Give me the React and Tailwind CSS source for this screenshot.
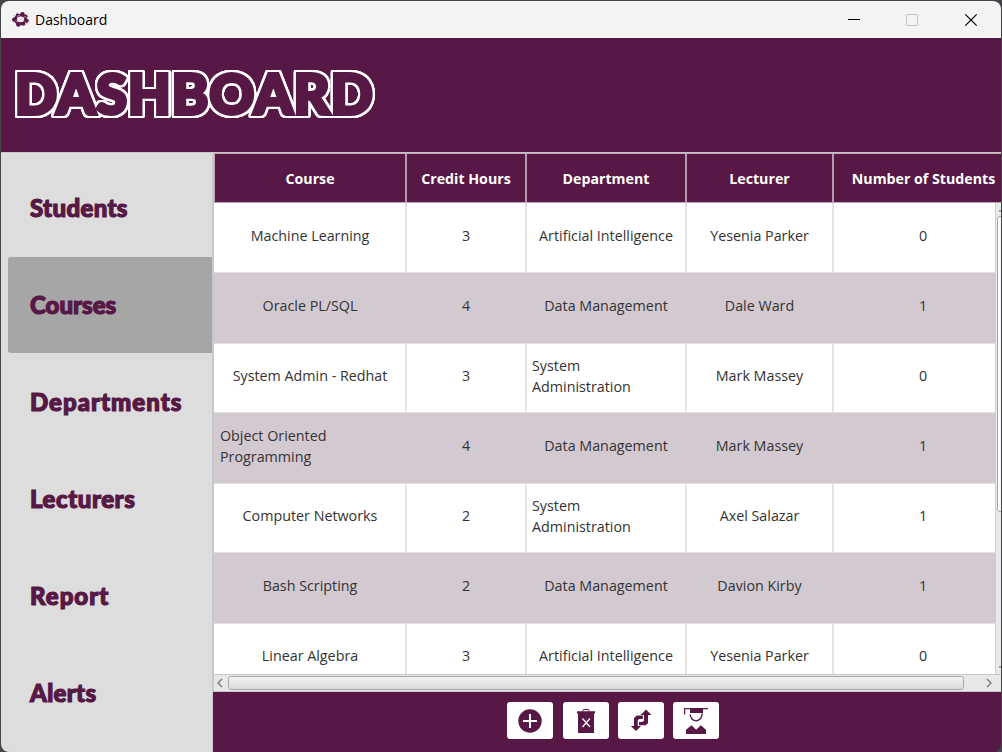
const navItems = [
  { label: "Students", tracking: "tracking-[0.35px]" },
  { label: "Courses", tracking: "tracking-[0px]", active: true },
  { label: "Departments", tracking: "tracking-[1px]" },
  { label: "Lecturers", tracking: "tracking-[0.55px]" },
  { label: "Report", tracking: "tracking-[1px]" },
  { label: "Alerts", tracking: "tracking-[0.3px]" },
];

const columns = ["Course", "Credit Hours", "Department", "Lecturer", "Number of Students"];

const rows = [
  ["Machine Learning", "3", "Artificial Intelligence", "Yesenia Parker", "0"],
  ["Oracle PL/SQL", "4", "Data Management", "Dale Ward", "1"],
  ["System Admin - Redhat", "3", "System Administration", "Mark Massey", "0"],
  ["Object Oriented Programming", "4", "Data Management", "Mark Massey", "1"],
  ["Computer Networks", "2", "System Administration", "Axel Salazar", "1"],
  ["Bash Scripting", "2", "Data Management", "Davion Kirby", "1"],
  ["Linear Algebra", "3", "Artificial Intelligence", "Yesenia Parker", "0"],
];

const wraps = ["System Administration", "Object Oriented Programming"];

function AppLogo() {
  return (
    <svg width="17" height="15" viewBox="0 0 17 15">
      <ellipse cx="8.5" cy="7.5" rx="5" ry="4.3" fill="none" stroke="#571845" strokeWidth="3" />
      <g fill="#571845">
        <circle cx="10.5" cy="2.2" r="2.2" />
        <circle cx="5.6" cy="3" r="1.8" />
        <circle cx="2.2" cy="7.6" r="2.2" />
        <circle cx="6.3" cy="12.6" r="2.2" />
        <circle cx="11.4" cy="11.8" r="1.9" />
        <circle cx="14.7" cy="8.8" r="2.1" />
        <circle cx="13.8" cy="4.2" r="1.8" />
      </g>
      <ellipse cx="8.600" cy="7.300" rx="3.600" ry="2.700" fill="#eee6ec" />
      <path d="M5 4.500 8 2.800M11.500 5.200l2.800-.5M13 9.500l.8 1.800M3.400 8.700 5.500 10" stroke="#c9b4c3" strokeWidth=".8" />
      <path d="M1.500 4.200 3 2.800M13.200 13.200l2-1.500" stroke="#d8cfc0" strokeWidth="1.500" />
    </svg>
  );
}

function TitleBar() {
  return (
    <div className="flex h-[37px] shrink-0 items-center bg-[#f3f3f3] pl-[11px]">
      <AppLogo />
      <span className="ml-[6px] flex-1 font-['Open_Sans',sans-serif] text-[14px] text-black">Dashboard</span>
      <svg width="140" height="18" viewBox="0 0 140 18" fill="none" className="mr-[17px]">
        <path d="M4 8.5h12" stroke="#000" />
        <rect x="62.5" y="3.5" width="11" height="11" rx="1" stroke="#c3c3c3" />
        <path d="m121.300 3.300 11.400 11.400m0-11.400-11.400 11.400" stroke="#000" strokeWidth="1.200" />
      </svg>
    </div>
  );
}

function Sidebar() {
  return (
    <nav className="flex w-[212px] shrink-0 flex-col gap-px border-r border-[#c8c8c8] bg-[#dddddd] pt-[7px] pl-[7px]">
      {navItems.map((item) => (
        <button
          key={item.label}
          className={
            "flex h-24 shrink-0 items-center rounded-l-[3px] pl-[22px] font-['Lato',sans-serif] text-[24px] font-black text-[#571845] [-webkit-text-stroke:1.2px_#571845] " +
            item.tracking +
            (item.active ? " bg-[#a6a6a6]" : "")
          }
        >
          {item.label}
        </button>
      ))}
    </nav>
  );
}

function Chevron({ d, className }) {
  return (
    <svg width="6" height="10" viewBox="0 0 6 10" fill="none" className={className}>
      <path d={d} stroke="#777" strokeWidth="1.300" />
    </svg>
  );
}

function Table() {
  return (
    <div className="flex min-h-0 flex-1 flex-col overflow-hidden bg-[#c8c8c8] pl-px">
      <div className="grid h-[50px] w-[798px] shrink-0 grid-cols-[192px_120px_160px_147px_179px] border-y border-l border-[#bda5b6] bg-[#571845]">
        {columns.map((name) => (
          <div
            key={name}
            className="flex items-center justify-center border-r-2 border-[#b39bab] pt-px font-['Open_Sans',sans-serif] text-[14.200px] font-bold whitespace-nowrap text-white last:border-r-0"
          >
            {name}
          </div>
        ))}
      </div>
      <div className="flex min-h-0 flex-1">
        <div className="w-[782px] overflow-hidden">
          {rows.map((row, i) => (
            <div
              key={i}
              className={
                "grid grid-cols-[193px_120px_160px_147px_178px] border-b border-[#e2e2e2] " +
                (i % 2 ? "h-[71px] bg-[#d3c9d0]" : i === 0 ? "h-[70px] bg-white" : "h-[69px] bg-white")
              }
            >
              {row.map((cell, j) => (
                <div
                  key={j}
                  className={
                    "flex items-center border-r-2 pr-[5px] font-['Open_Sans',sans-serif] text-[14.300px] leading-[21px] text-[#333] last:border-r-0 " +
                    (i % 2 ? "border-[#cfcbd0] " : "border-[#e4e4e4] ") +
                    (j === 0 ? "pl-[6px] " : "pl-[5px] ") +
                    (wraps.includes(cell) ? "justify-start pb-[4px]" : "justify-center pb-[5px] whitespace-nowrap")
                  }
                >
                  <span className={wraps.includes(cell) ? "w-[115px]" : ""}>{cell}</span>
                </div>
              ))}
            </div>
          ))}
        </div>
        <div className="flex w-[6px] flex-col overflow-hidden border-l border-[#d0d0d0] bg-[#e8e8e8]">
          <div className="mt-[7px] ml-[3px] h-[2px] w-[2px] bg-[#999]" />
          <div className="mt-[4px] ml-px h-[296px] w-[13px] shrink-0 rounded-[3px] border border-[#a8a8a8] bg-linear-to-r from-white to-[#d9d9d9]" />
          <div className="mt-auto mb-[6px] ml-[3px] h-[2px] w-[2px] shrink-0 bg-[#999]" />
        </div>
      </div>
      <div className="flex h-[18px] shrink-0 items-center border-y border-[#c8c8c8] bg-[#e8e8e8] pl-[3px]">
        <Chevron d="M5 1 1 5l4 4" />
        <div className="ml-[5px] h-[14px] w-[736px] rounded-[3px] border border-[#a8a8a8] bg-linear-to-b from-[#f3f3f3] to-[#d9d9d9]" />
        <Chevron d="m1 1 4 4-4 4" className="ml-[22px]" />
      </div>
    </div>
  );
}

function AddIcon() {
  return (
    <svg width="24" height="24" viewBox="0 0 24 24">
      <circle cx="12" cy="12" r="11.700" fill="#571845" />
      <path d="M12 5v14M5 12h14" stroke="#fff" strokeWidth="2" />
    </svg>
  );
}

function TrashIcon() {
  return (
    <svg width="24" height="24" viewBox="0 0 24 24" fill="none">
      <path d="M9 2.500V1.200Q9 .5 9.700.5h4.600q.7 0 .7.700v1.300" stroke="#571845" />
      <path d="M3 2.300h18v2.200h-1V24H4V4.500H3z" fill="#571845" />
      <path d="m8.500 9.500 7.500 8.500m0-8.500-7.500 8.500" stroke="#fff" strokeWidth="1.300" />
    </svg>
  );
}

function SwapIcon() {
  return (
    <svg width="24" height="24" viewBox="0 0 24 24" className="mb-[2px]">
      <g fill="#571845">
        <path d="M17 1.500 22.500 7H19v8.300l-2.500 2H10v-3.500h3.500l1.500-1V7h-3.300z" />
        <path d="M7 23 1.800 18H5V10l2.800-2.500H14V11h-4l-1.200 1.200V18H12z" />
      </g>
      <path d="M9.400 16v-2.700h3.200l1.700-1.300V8.700" fill="none" stroke="#fff" strokeWidth="1" />
    </svg>
  );
}

function GraduateIcon() {
  return (
    <svg width="26" height="28" viewBox="0 0 26 28">
      <g fill="#571845">
        <path d="M1 1h24v1.300H20V6H7V2.300H2.200V7.500H1z" />
        <path d="M3 27v-4.300l5.500-4.500 4.700 4.500 4.600-4.500 5.200 4.500V27z" />
      </g>
      <path d="M7.200 7.500q.6 6 6 6.200 5.400-.2 6-7.200" fill="none" stroke="#571845" strokeWidth="1.400" />
    </svg>
  );
}

const actions = [
  { name: "add", Icon: AddIcon, cls: "" },
  { name: "delete", Icon: TrashIcon, cls: "ml-[10px]" },
  { name: "update", Icon: SwapIcon, cls: "ml-[9px]" },
  { name: "graduate", Icon: GraduateIcon, cls: "ml-[9px]" },
];

export default function App() {
  return (
    <div className="h-[752px] w-[1002px] overflow-hidden bg-[#454449] pt-px pr-px pl-px">
      <div className="flex h-[751px] flex-col overflow-hidden rounded-[8px] bg-[#571845]">
        <TitleBar />
        <header className="flex h-[115px] shrink-0 items-center border-b border-[#c8c8c8] bg-[#571845] pb-[3px] pl-[14px]">
          <h1 className="font-['Lato',sans-serif] text-[55px] leading-none font-black tracking-[1.200px] text-[#571845] [-webkit-text-stroke:4px_#571845] [filter:drop-shadow(1px_0_0_white)_drop-shadow(-1px_0_0_white)_drop-shadow(0_1px_0_white)_drop-shadow(0_-1px_0_white)_drop-shadow(1px_0_0_white)_drop-shadow(-1px_0_0_white)_drop-shadow(0_1px_0_white)_drop-shadow(0_-1px_0_white)]">
            DASHBOARD
          </h1>
        </header>
        <div className="flex min-h-0 flex-1">
          <Sidebar />
          <main className="flex min-w-0 flex-1 flex-col">
            <Table />
            <footer className="flex h-[60px] shrink-0 items-start pt-[10px] pl-[294px]">
              {actions.map(({ name, Icon, cls }) => (
                <button key={name} className={"flex h-[37px] w-[46px] shrink-0 items-center justify-center rounded-[3px] bg-white " + cls}>
                  <Icon />
                </button>
              ))}
            </footer>
          </main>
        </div>
      </div>
    </div>
  );
}
